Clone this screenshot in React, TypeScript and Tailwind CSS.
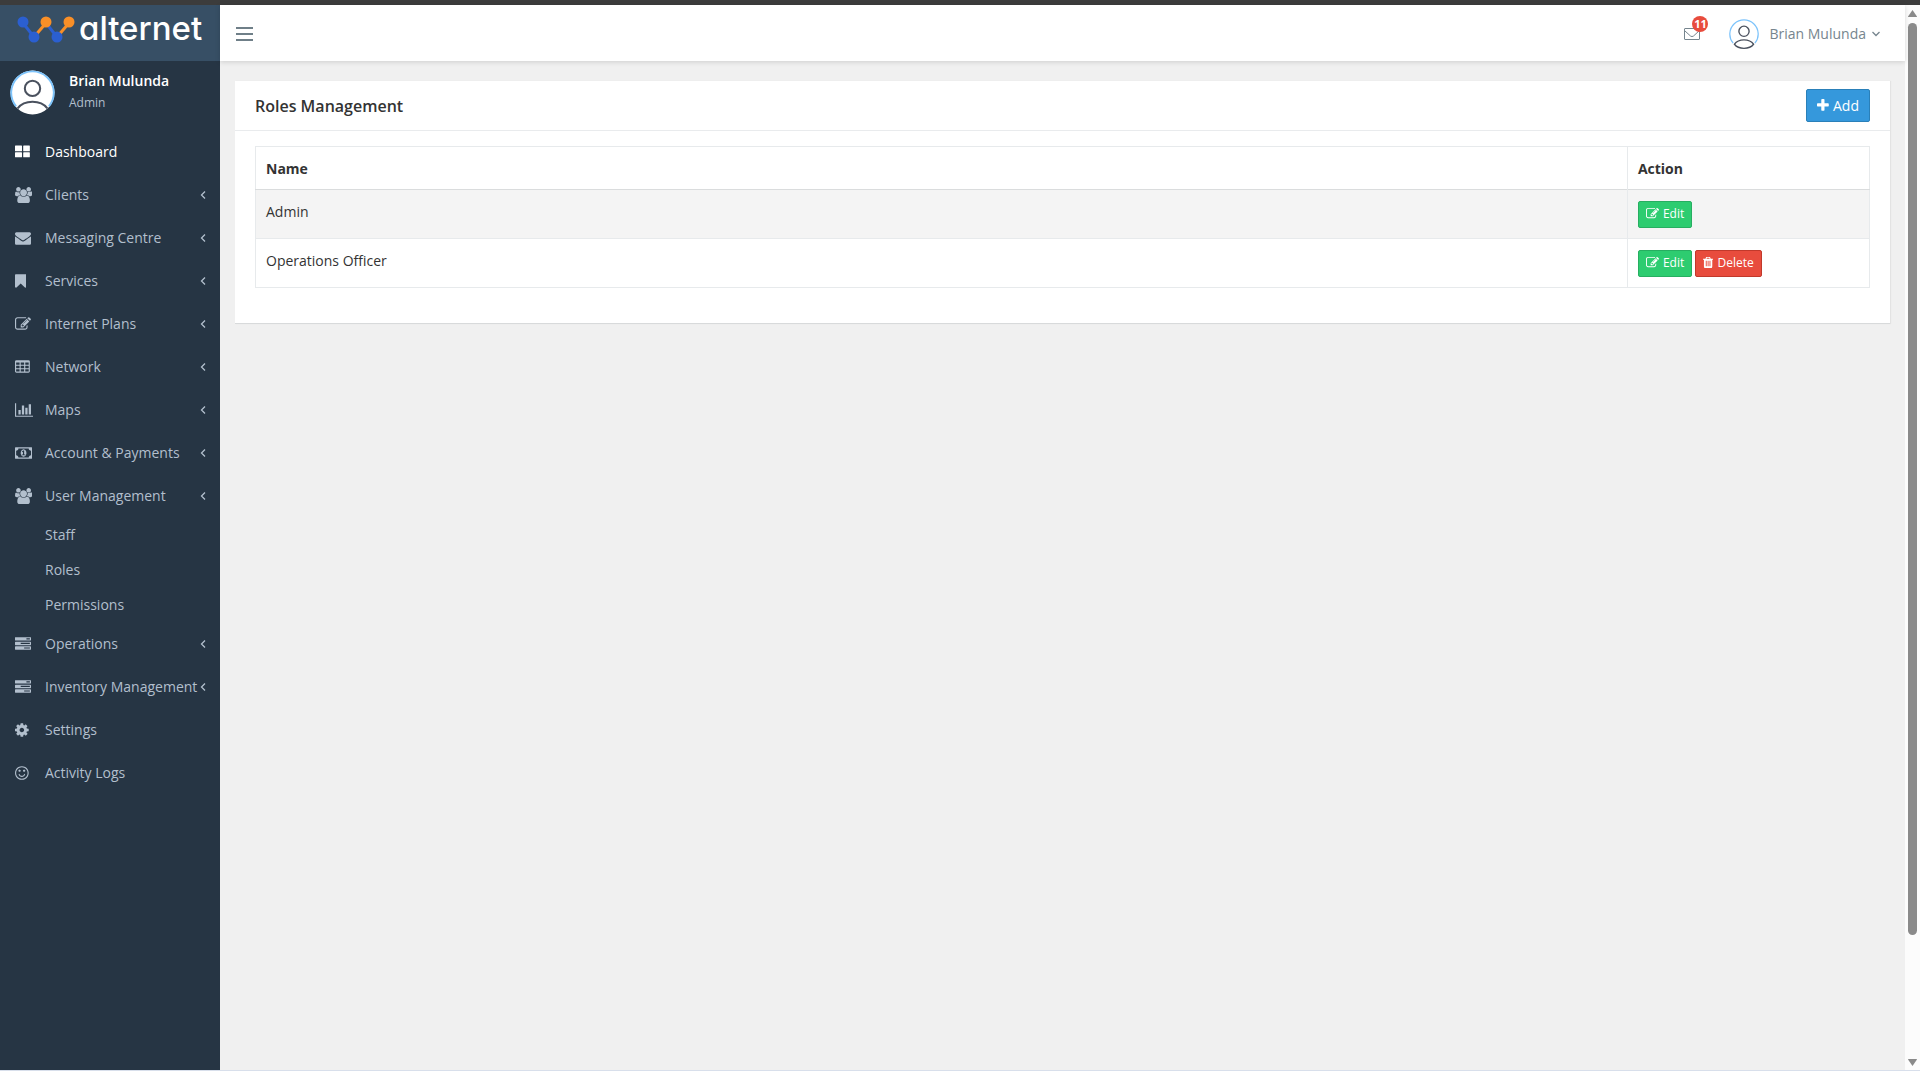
import React from "react";

type Glyph = { x: number; w: number; d: string };

const box = (x: number, y: number) =>
  `M${x + 384} ${y + 224}v-192q0-14-9-23t-23-9h-320q-14 0-23 9t-9 23v192q0 14 9 23t23 9h320q14 0 23-9t9-23z`;

const taskRow = (y: number) =>
  `M1792 ${y + 64}v256q0 26-19 45t-45 19h-1664q-26 0-45-19t-19-45v-256q0-26 19-45t45-19h1664q26 0 45 19t19 45z`;

const glyphs: Record<string, Glyph> = {
  thLarge: {
    x: 64,
    w: 1664,
    d: "M848 984v448q0 60-60 60h-664q-60 0-60-60v-448q0-60 60-60h664q60 0 60 60zm0-768v528q0 60-60 60h-664q-60 0-60-60v-528q0-60 60-60h664q60 0 60 60zm880 768v448q0 60-60 60h-624q-60 0-60-60v-448q0-60 60-60h624q60 0 60 60zm0-768v528q0 60-60 60h-624q-60 0-60-60v-528q0-60 60-60h624q60 0 60 60z",
  },
  users: {
    x: 64,
    w: 1920,
    d: "M657 896q-162 5-265 128h-134q-82 0-138-40.5t-56-118.5q0-353 124-353 6 0 43.5 21t97.5 42.5 119 21.5q67 0 133-23-5 37-5 66 0 159 93 293zm1071 637q0 120-73 189.5t-194 69.5h-874q-121 0-194-69.5t-73-189.5q0-53 3.5-103.5t14-109 26.5-108.5 43-97.5 62-81 85.5-53.5 111.5-20q10 0 43 21.5t73 48 107 48 135 21.5 135-21.5 107-48 73-48 43-21.5q61 0 111.5 20t85.5 53.5 62 81 43 97.5 26.5 108.5 14 109 3.5 103.5zm-1024-1277q0 106-75 181t-181 75-181-75-75-181 75-181 181-75 181 75 75 181zm704 384q0 159-112.5 271.5t-271.5 112.5-271.5-112.5-112.5-271.5 112.5-271.5 271.5-112.5 271.5 112.5 112.5 271.5zm576 225q0 78-56 118.5t-138 40.5h-134q-103-123-265-128 93-134 93-293 0-29-5-66 66 23 133 23 59 0 119-21.5t97.5-42.5 43.5-21q124 0 124 353zm-128-609q0 106-75 181t-181 75-181-75-75-181 75-181 181-75 181 75 75 181z",
  },
  envelope: {
    x: 0,
    w: 1792,
    d: "M1792 710v794q0 66-47 113t-113 47h-1472q-66 0-113-47t-47-113v-794q44 49 101 87 362 246 497 345 57 42 92.5 65.5t94.5 48 110 24.5h2q51 0 110-24.5t94.5-48 92.5-65.5q170-123 498-345 57-39 100-87zm0-294q0 79-49 151t-122 123q-376 261-468 325-10 7-42.5 30.5t-54 38-52 32.5-57.5 27-50 9h-2q-23 0-50-9t-57.5-27-52-32.5-54-38-42.5-30.5q-91-64-262-182.5t-205-142.5q-62-42-117-115.5t-55-136.5q0-78 41.5-130t118.5-52h1472q65 0 112.5 47t47.500 113z",
  },
  bookmark: {
    x: 256,
    w: 1280,
    d: "M1420 128q23 0 44 9 33 13 52.5 41t19.5 62v1289q0 34-19.5 62t-52.5 41q-19 8-44 8-48 0-83-32l-441-424-441 424q-36 33-83 33-23 0-44-9-33-13-52.5-41t-19.5-62v-1289q0-34 19.5-62t52.5-41q21-9 44-9h1048z",
  },
  edit: {
    x: 0,
    w: 1792,
    d: "M888 1184l116-116-152-152-116 116v56h96v96h56zm440-720q-16-16-33 1l-350 350q-17 17-1 33t33-1l350-350q17-17 1-33zm80 594v190q0 119-84.5 203.5t-203.5 84.5h-832q-119 0-203.5-84.5t-84.5-203.5v-832q0-119 84.5-203.5t203.5-84.5h832q63 0 117 25 15 7 18 23 3 17-9 29l-49 49q-14 14-32 8-23-6-45-6h-832q-66 0-113 47t-47 113v832q0 66 47 113t113 47h832q66 0 113-47t47-113v-126q0-13 9-22l64-64q15-15 35-7t20 29zm-96-738l288 288-672 672h-288v-288zm444 132l-92 92-288-288 92-92q28-28 68-28t68 28l152 152q28 28 28 68t-28 68z",
  },
  table: {
    x: 64,
    w: 1664,
    d:
      "M1728 288v1088q0 66-47 113t-113 47h-1344q-66 0-113-47t-47-113v-1088q0-66 47-113t113-47h1344q66 0 113 47t47 113z" +
      [192, 704, 1216].map((x) => [384, 768, 1152].map((y) => box(x, y)).join("")).join(""),
  },
  barChart: {
    x: 0,
    w: 2048,
    d: "M640 896v512h-256v-512h256zm384-512v1024h-256v-1024h256zm1024 1152v128h-2048v-1536h128v1408h1920zm-640-896v768h-256v-768h256zm384-384v1152h-256v-1152h256z",
  },
  money: {
    x: 0,
    w: 1920,
    d: "M768 1152h384v-96h-128v-448h-114l-148 137 77 80q42-37 55-57h2v288h-128v96zm512-256q0 70-21 142t-59.5 134-101.5 101-138 39-138-39-101.5-101-59.5-134-21-142 21-142 59.5-134 101.5-101 138-39 138 39 101.5 101 59.5 134 21 142zm512 256v-512q-106 0-181-75t-75-181h-1152q0 106-75 181t-181 75v512q106 0 181 75t75 181h1152q0-106 75-181t181-75zm128-832v1152q0 26-19 45t-45 19h-1792q-26 0-45-19t-19-45v-1152q0-26 19-45t45-19h1792q26 0 45 19t19 45z",
  },
  tasks: {
    x: 0,
    w: 1792,
    d:
      "M1024 1408h640v-128h-640zM640 896h1024v-128h-1024zM1280 384h384v-128h-384z" +
      taskRow(128) +
      taskRow(640) +
      taskRow(1152),
  },
  cog: {
    x: 128,
    w: 1536,
    d: "M1152 896q0-106-75-181t-181-75-181 75-75 181 75 181 181 75 181-75 75-181zm512-109v222q0 12-8 23t-20 13l-185 28q-19 54-39 91 35 50 107 138 10 12 10 25t-9 23q-27 37-99 108t-94 71q-12 0-26-9l-138-108q-44 23-91 38-16 136-29 186-7 28-36 28h-222q-14 0-24.5-8.5t-11.5-21.5l-28-184q-49-16-90-37l-141 107q-10 9-25 9-14 0-25-11-126-114-165-168-7-10-7-23 0-12 8-23 15-21 51-66.5t54-70.5q-27-50-41-99l-183-27q-13-2-21-12.5t-8-23.5v-222q0-12 8-23t19-13l186-28q14-46 39-92-40-57-107-138-10-12-10-24 0-10 9-23 26-36 98.5-107.5t94.5-71.5q13 0 26 10l138 107q44-23 91-38 16-136 29-186 7-28 36-28h222q14 0 24.5 8.5t11.5 21.5l28 184q49 16 90 37l142-107q9-9 24-9 13 0 25 10 129 119 165 170 7 8 7 22 0 12-8 23-15 21-51 66.5t-54 70.5q26 50 41 98l183 28q13 2 21 12.5t8 23.5z",
  },
  smile: {
    x: 128,
    w: 1536,
    d: "M1262 1075q-37 121-138 195t-228 74-228-74-138-195q-8-25 4-48.5t38-31.5q25-8 48.5 4t31.5 38q25 80 92.5 129.5t151.5 49.5 151.5-49.5 92.5-129.5q8-26 32-38t49-4 37 31.5 4 48.5zm-494-435q0 53-37.5 90.5t-90.5 37.5-90.5-37.5-37.5-90.5 37.5-90.5 90.5-37.5 90.5 37.5 37.5 90.5zm512 0q0 53-37.5 90.5t-90.5 37.5-90.5-37.5-37.5-90.5 37.5-90.5 90.5-37.5 90.5 37.5 37.5 90.5zm256 256q0-130-51-248.5t-136.5-204-204-136.5-248.5-51-248.5 51-204 136.5-136.5 204-51 248.5 51 248.5 136.5 204 204 136.5 248.5 51 248.5-51 204-136.5 136.5-204 51-248.5zm128 0q0 209-103 385.5t-279.5 279.5-385.5 103-385.5-103-279.5-279.5-103-385.5 103-385.5 279.5-279.5 385.5-103 385.5 103 279.5 279.5 103 385.5z",
  },
  plus: {
    x: 192,
    w: 1408,
    d: "M1600 736v192q0 40-28 68t-68 28h-416v416q0 40-28 68t-68 28h-192q-40 0-68-28t-28-68v-416h-416q-40 0-68-28t-28-68v-192q0-40 28-68t68-28h416v-416q0-40 28-68t68-28h192q40 0 68 28t28 68v416h416q40 0 68 28t28 68z",
  },
  trash: {
    x: 192,
    w: 1408,
    d: "M704 1376v-704q0-14-9-23t-23-9h-64q-14 0-23 9t-9 23v704q0 14 9 23t23 9h64q14 0 23-9t9-23zm256 0v-704q0-14-9-23t-23-9h-64q-14 0-23 9t-9 23v704q0 14 9 23t23 9h64q14 0 23-9t9-23zm256 0v-704q0-14-9-23t-23-9h-64q-14 0-23 9t-9 23v704q0 14 9 23t23 9h64q14 0 23-9t9-23zm-544-992h448l-48-117q-7-9-17-11h-317q-10 2-17 11zm928 32v64q0 14-9 23t-23 9h-96v948q0 83-47 143.5t-113 60.5h-832q-66 0-113-58.5t-47-141.5v-952h-96q-14 0-23-9t-9-23v-64q0-14 9-23t23-9h309l70-167q15-37 54-63t79-26h320q40 0 79 26t54 63l70 167h309q14 0 23 9t9 23z",
  },
};

function Icon({ name, className }: { name: string; className: string }) {
  const g = glyphs[name];
  return (
    <svg
      viewBox={`${g.x} 0 ${g.w} 1792`}
      className={`w-auto shrink-0 fill-current ${className}`}
      fillRule="evenodd"
      aria-hidden="true"
    >
      <path d={g.d} />
    </svg>
  );
}

function AngleLeft() {
  return (
    <svg viewBox="0 0 6 10" className="absolute top-[17px] right-[14px] h-[10px] w-[6px]" aria-hidden="true">
      <path d="M5 1.500L1.500 5L5 8.500" fill="none" stroke="currentColor" strokeWidth="1.300" />
    </svg>
  );
}

function Avatar({ className, round }: { className: string; round?: boolean }) {
  return (
    <svg viewBox="0 0 44 44" className={className} aria-hidden="true">
      <circle cx="22" cy="22" r="21.500" fill="#fff" />
      <path d="M6 35.500A20.800 20.800 0 1 1 38 35.500" fill="none" stroke="#7cc3fb" strokeWidth="1.800" />
      <g fill="none" stroke="#4a515e" strokeWidth="2">
        <circle cx="22" cy="18" r="7.500" />
        {round ? (
          <path d="M7.500 37.500C14 29 30 29 36.500 37.500" />
        ) : (
          <path d="M8 37C14 28.500 30 28.500 36 37C30 45 14 45 8 37Z" />
        )}
      </g>
    </svg>
  );
}

const menu: { label: string; icon: string; arrow?: boolean; active?: boolean; children?: string[] }[] = [
  { label: "Dashboard", icon: "thLarge", active: true },
  { label: "Clients", icon: "users", arrow: true },
  { label: "Messaging Centre", icon: "envelope", arrow: true },
  { label: "Services", icon: "bookmark", arrow: true },
  { label: "Internet Plans", icon: "edit", arrow: true },
  { label: "Network", icon: "table", arrow: true },
  { label: "Maps", icon: "barChart", arrow: true },
  { label: "Account & Payments", icon: "money", arrow: true },
  { label: "User Management", icon: "users", arrow: true, children: ["Staff", "Roles", "Permissions"] },
  { label: "Operations", icon: "tasks", arrow: true },
  { label: "Inventory Management", icon: "tasks", arrow: true },
  { label: "Settings", icon: "cog" },
  { label: "Activity Logs", icon: "smile" },
];

function Logo() {
  return (
    <a href="#home" className="flex h-14 shrink-0 items-start bg-[#374f65] pl-4 text-white">
      <svg viewBox="0 0 60 30" className="mt-[9px] h-[30px] w-[60px] shrink-0" aria-hidden="true">
        <g fill="none" strokeWidth="3">
          <path d="M7 9L18 23" stroke="#2b5fd0" />
          <path d="M30 9L18 23" stroke="#f98f27" />
          <path d="M30 9L41 23" stroke="#2b5fd0" />
          <path d="M53 9L41 23" stroke="#f98f27" />
        </g>
        <g fill="#2b5fd0">
          <circle cx="7" cy="8" r="5.500" />
          <circle cx="18" cy="23" r="5.500" />
          <circle cx="41" cy="23" r="5.500" />
        </g>
        <g fill="#f98f27">
          <circle cx="30" cy="8" r="5.500" />
          <circle cx="53" cy="8" r="5.500" />
        </g>
      </svg>
      <span className="ml-[3px] font-['Inter',sans-serif] text-[33px] leading-[46px] font-medium [font-feature-settings:'cv11']">
        alternet
      </span>
    </a>
  );
}

function Sidebar() {
  return (
    <aside className="flex w-[220px] shrink-0 flex-col bg-[#263544] text-[#b2bfcd]">
      <Logo />
      <div className="flex h-[69px] shrink-0 items-start gap-[14px] pt-[9px] pl-[10px]">
        <Avatar round className="h-[45px] w-[45px] shrink-0" />
        <div>
          <p className="text-sm leading-[22px] font-semibold text-white">Brian Mulunda</p>
          <p className="text-xs leading-[22px]">Admin</p>
        </div>
      </div>
      <nav aria-label="Main">
        <ul>
          {menu.map((m) => (
            <li key={m.label}>
              <a
                href="#menu"
                className={`relative flex h-[43px] items-center pl-[15px] text-sm whitespace-nowrap ${m.active ? "text-white" : ""}`}
              >
                <span className="flex w-[30px] shrink-0">
                  <Icon name={m.icon} className="h-4" />
                </span>
                {m.label}
                {m.arrow && <AngleLeft />}
              </a>
              {m.children && (
                <ul>
                  {m.children.map((c) => (
                    <li key={c}>
                      <a href="#menu" className="flex h-[35px] items-center pl-[45px] text-sm">
                        {c}
                      </a>
                    </li>
                  ))}
                </ul>
              )}
            </li>
          ))}
        </ul>
      </nav>
    </aside>
  );
}

function TopBar() {
  return (
    <header className="z-10 flex h-14 shrink-0 items-center justify-between bg-white pt-0.5 pr-[25px] pl-[15px] shadow-[0_1px_5px_rgba(0,0,0,0.15)]">
      <button type="button" aria-label="Toggle menu" className="flex flex-col gap-1 px-px">
        <span className="h-[2px] w-[17px] bg-[#6f7f88]" />
        <span className="h-[2px] w-[17px] bg-[#6f7f88]" />
        <span className="h-[2px] w-[17px] bg-[#6f7f88]" />
      </button>
      <div className="flex items-center">
        <button type="button" aria-label="Messages" className="relative mr-[29px]">
          <svg viewBox="0 0 16 12" className="h-3 w-4" fill="none" stroke="#76858e" aria-hidden="true">
            <rect x="0.500" y="0.500" width="15" height="11" rx="0.500" />
            <path d="M1 3L6.500 8Q8 9.200 9.500 8L15 3" />
          </svg>
          <span className="absolute -top-[12px] left-2 flex h-4 w-4 items-center justify-center rounded-full bg-[#e84c3d] text-[11px] leading-4 font-bold text-white">
            11
          </span>
        </button>
        <button type="button" className="flex items-center text-sm text-[#76858e]">
          <Avatar className="mr-[10px] h-[30px] w-[30px]" />
          Brian Mulunda
          <svg viewBox="0 0 8 6" className="ml-[6px] h-[6px] w-2" fill="none" stroke="currentColor" strokeWidth="1.300" aria-hidden="true">
            <path d="M0.500 1L4 4.500L7.500 1" />
          </svg>
        </button>
      </div>
    </header>
  );
}

function EditButton() {
  return (
    <button
      type="button"
      className="flex h-[27px] items-center gap-1 rounded-[2px] border border-[#27ae61] bg-[#2dcc70] px-[7px] pb-0.5 text-xs text-white"
    >
      <Icon name="edit" className="h-[13px]" />
      Edit
    </button>
  );
}

function DeleteButton() {
  return (
    <button
      type="button"
      className="flex h-[27px] items-center gap-1 rounded-[2px] border border-[#c1392b] bg-[#e84c3d] px-[7px] pb-0.5 text-xs text-white"
    >
      <Icon name="trash" className="h-[13px]" />
      Delete
    </button>
  );
}

const roles = [
  { name: "Admin", removable: false },
  { name: "Operations Officer", removable: true },
];

function RolesCard() {
  return (
    <section className="border-b border-[#d8dadb] bg-white shadow-[1px_0_1px_rgba(0,0,0,0.05)]">
      <div className="flex h-[50px] items-center justify-between border-b border-[#e9ebed] px-5">
        <h1 className="text-base font-semibold text-[#333]">Roles Management</h1>
        <button
          type="button"
          className="flex h-[33px] items-center gap-1 rounded-[2px] border border-[#2a80b9] bg-[#3598dc] px-[10px] text-sm text-white"
        >
          <Icon name="plus" className="h-[15px]" />
          Add
        </button>
      </div>
      <div className="px-5 pt-[15px] pb-[35px]">
        <table className="w-full border-collapse border border-[#e7eaec] text-left text-sm leading-[21px] text-[#333]">
          <thead>
            <tr className="border-b border-[#dadcdd]">
              <th className="border-r border-r-[#e7eaec] px-[10px] pt-[11px] pb-[10px] font-bold">Name</th>
              <th className="w-[15%] px-[10px] pt-[11px] pb-[10px] font-bold">Action</th>
            </tr>
          </thead>
          <tbody>
            {roles.map((r) => (
              <tr key={r.name} className="border-b border-[#e7eaec] align-top odd:bg-[#f4f4f4]">
                <td className="border-r border-[#e7eaec] px-[10px] py-[11px]">{r.name}</td>
                <td className="px-[10px] pt-[11px] pb-[10px]">
                  <div className="flex gap-[3px]">
                    <EditButton />
                    {r.removable && <DeleteButton />}
                  </div>
                </td>
              </tr>
            ))}
          </tbody>
        </table>
      </div>
    </section>
  );
}

function ScrollBar() {
  return (
    <div className="flex w-[15px] shrink-0 flex-col items-center bg-[#fcfcfc] pt-[5px] pb-1" aria-hidden="true">
      <svg viewBox="0 0 9 7" className="h-[7px] w-[9px] shrink-0 fill-[#8a8a8a]">
        <path d="M4.500 0L9 6.500Q9 7 8.500 7H0.500Q0 7 0 6.500Z" />
      </svg>
      <div className="mt-[6px] flex w-[9px] flex-1 flex-col">
        <div className="h-[88%] w-full rounded-full bg-[#8a8a8a]" />
      </div>
      <svg viewBox="0 0 9 7" className="h-[7px] w-[9px] shrink-0 fill-[#8a8a8a]">
        <path d="M4.500 7L9 0.500Q9 0 8.500 0H0.500Q0 0 0 0.500Z" />
      </svg>
    </div>
  );
}

export default function App() {
  return (
    <div className="flex min-h-screen flex-col border-t-[5px] border-b border-t-[#3c3c3c] border-b-[#d8dfeb] font-['Open_Sans',sans-serif]">
      <div className="flex flex-1">
        <Sidebar />
        <div className="flex min-w-0 flex-1 flex-col bg-[#f0f0f0]">
          <TopBar />
          <main className="px-[15px] pt-5">
            <RolesCard />
          </main>
        </div>
        <ScrollBar />
      </div>
    </div>
  );
}
